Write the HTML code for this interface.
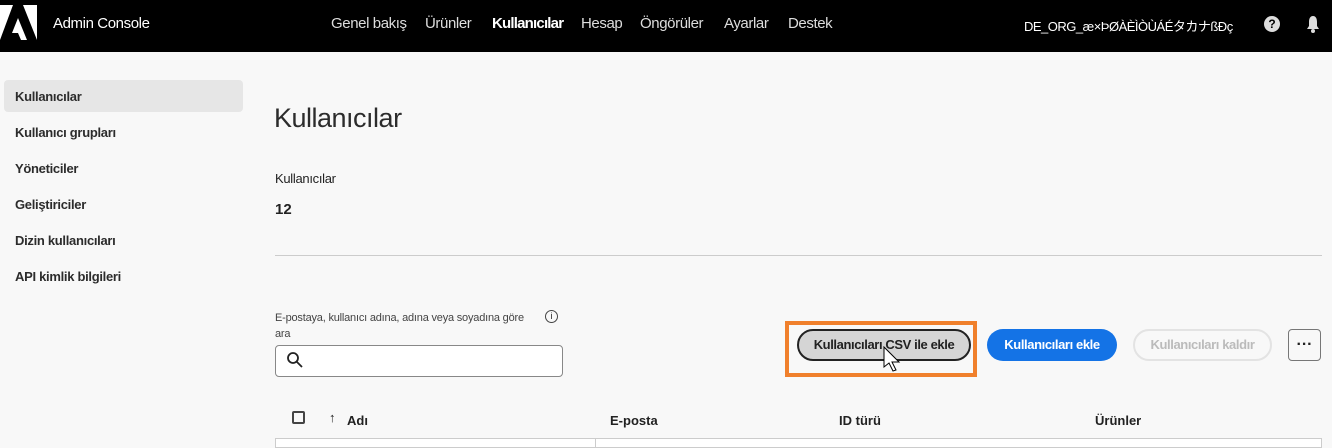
<!DOCTYPE html>
<html><head><meta charset="utf-8"><style>
*{margin:0;padding:0;box-sizing:border-box}
body{width:1332px;height:445px;overflow:hidden;background:#f8f8f8;font-family:"Liberation Sans","Noto Sans CJK JP",sans-serif;color:#222;position:relative}
.top{position:absolute;left:0;top:0;width:1332px;height:52px;background:#000;color:#fff}
.top span{position:absolute;top:15px;font-size:15px;letter-spacing:-0.4px}
.side div{position:absolute;left:4px;width:239px;height:32px;font-size:13px;font-weight:bold;padding:9px 0 0 11px;color:#2c2c2c;letter-spacing:-0.3px}
.abs{position:absolute}
.btn{position:absolute;height:32px;border-radius:16px;font-size:13px;font-weight:bold;text-align:center;line-height:28px;letter-spacing:-0.4px}
</style></head><body>
<div class="top">
<svg class="abs" style="left:0;top:5px" width="37" height="35" viewBox="0 0 37 35"><polygon points="0,0 13,0 0,35" fill="#fff"/><polygon points="23,0 37,0 37,35" fill="#fff"/><polygon points="18,13 27,35 21,35 18,28 12,28" fill="#fff"/></svg>
<span style="left:53px">Admin Console</span>
<span style="left:331px;color:#ddd">Genel bakış</span>
<span style="left:425px;color:#ddd">Ürünler</span>
<span style="left:492px;font-weight:bold;letter-spacing:-0.8px">Kullanıcılar</span>
<span style="left:581px;color:#ddd">Hesap</span>
<span style="left:640px;color:#ddd">Öngörüler</span>
<span style="left:724px;color:#ddd">Ayarlar</span>
<span style="left:788px;color:#ddd">Destek</span>
<span style="left:1024px;font-size:13px;top:16px;letter-spacing:-0.5px">DE_ORG_æ×ÞØÀÈÌÒÙÁÉタカナßĐç</span>
<div class="abs" style="left:1264px;top:16px;width:16px;height:16px;border-radius:50%;background:#ddd;color:#000;font-size:12px;font-weight:bold;text-align:center;line-height:16px">?</div>
<svg class="abs" style="left:1306px;top:15px" width="14" height="18" viewBox="0 0 14 18"><path d="M7 1C4 1 3 4 3 7v4L1 14h12l-2-3V7C11 4 10 1 7 1z" fill="#ddd"/><circle cx="7" cy="16" r="2" fill="#ddd"/></svg>
</div>
<div class="side">
<div style="top:80px;background:#e6e6e6;border-radius:4px">Kullanıcılar</div>
<div style="top:116px">Kullanıcı grupları</div>
<div style="top:152px">Yöneticiler</div>
<div style="top:188px">Geliştiriciler</div>
<div style="top:224px">Dizin kullanıcıları</div>
<div style="top:260px">API kimlik bilgileri</div>
</div>
<div class="abs" style="left:274px;top:103px;font-size:27px;color:#2c2c2c;letter-spacing:-0.5px">Kullanıcılar</div>
<div class="abs" style="left:275px;top:171px;font-size:13px;letter-spacing:-0.3px">Kullanıcılar</div>
<div class="abs" style="left:275px;top:201px;font-size:15px;font-weight:bold">12</div>
<div class="abs" style="left:275px;top:255px;width:1047px;height:1px;background:#ccc"></div>
<div class="abs" style="left:275px;top:310px;width:258px;font-size:11px;line-height:16px;color:#444;letter-spacing:-0.2px">E-postaya, kullanıcı adına, adına veya soyadına göre ara</div>
<div class="abs" style="left:545px;top:310px;width:13px;height:13px;border:1.3px solid #444;border-radius:50%;font-size:9px;text-align:center;line-height:11px">i</div>
<div class="abs" style="left:275px;top:345px;width:288px;height:32px;border:1px solid #888;border-radius:4px;background:#fff"></div>
<svg class="abs" style="left:286px;top:351px" width="18" height="18" viewBox="0 0 18 18"><circle cx="7" cy="7" r="5" fill="none" stroke="#222" stroke-width="1.8"/><path d="M11 11l5 5" stroke="#222" stroke-width="1.8"/></svg>
<div class="abs" style="left:785px;top:321px;width:192px;height:56px;border:4px solid #f0802c"></div>
<div class="btn" style="left:797px;top:329px;width:174px;background:#d5d5d5;border:2px solid #222">Kullanıcıları CSV ile ekle</div>
<div class="btn" style="left:987px;top:329px;width:130px;background:#1473e6;color:#fff;line-height:32px">Kullanıcıları ekle</div>
<div class="btn" style="left:1133px;top:329px;width:139px;border:2px solid #e3e3e3;color:#bbb">Kullanıcıları kaldır</div>
<div class="abs" style="left:1288px;top:329px;width:33px;height:32px;border:1px solid #777;border-radius:4px;text-align:center;font-weight:bold;line-height:30px">···</div>
<svg class="abs" style="left:882px;top:346px" width="22" height="26" viewBox="0 0 22 26"><path d="M2 1v20l5-4 4 8 3-1-4-8h7z" fill="#fff" stroke="#000"/></svg>
<div class="abs" style="left:292px;top:411px;width:13px;height:13px;border:2px solid #444;border-radius:2px"></div>
<div class="abs" style="left:329px;top:410px;font-size:13px;font-weight:bold">↑</div>
<div class="abs" style="left:347px;top:413px;font-size:13px;font-weight:bold">Adı</div>
<div class="abs" style="left:610px;top:413px;font-size:13px;font-weight:bold">E-posta</div>
<div class="abs" style="left:839px;top:413px;font-size:13px;font-weight:bold">ID türü</div>
<div class="abs" style="left:1095px;top:413px;font-size:13px;font-weight:bold">Ürünler</div>
<div class="abs" style="left:275px;top:438px;width:1047px;height:10px;border:1px solid #ccc;background:#fff"></div>
<div class="abs" style="left:595px;top:438px;width:1px;height:10px;background:#ccc"></div>
</body></html>
